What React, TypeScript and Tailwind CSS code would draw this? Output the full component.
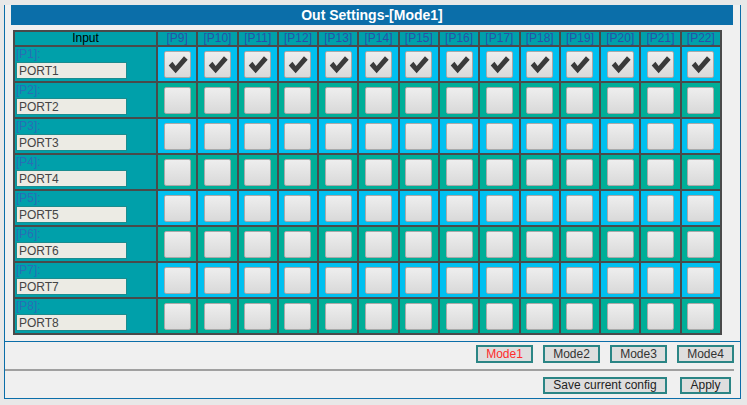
import { useState } from "react";

const outputs = Array.from({ length: 14 }, (_, i) => `P${i + 9}`);
const inputs = Array.from({ length: 8 }, (_, i) => ({
  id: `P${i + 1}`,
  name: `PORT${i + 1}`,
}));
const modes = ["Mode1", "Mode2", "Mode3", "Mode4"];

export default function App() {
  // input index -> set of checked outputs
  const [routes, setRoutes] = useState<boolean[][]>(() =>
    inputs.map((_, r) => outputs.map(() => r === 0)),
  );
  const [mode, setMode] = useState("Mode1");

  const toggle = (r: number, c: number) => {
    setRoutes((prev) =>
      prev.map((row, ri) =>
        row.map((v, ci) => (ci === c ? ri === r : v && ci !== c)),
      ),
    );
  };

  return (
    <div className="min-h-screen bg-[#e8e8e8] pt-[5px] pl-1 font-['Liberation_Sans',Arial,sans-serif]">
      <div className="w-[737px] h-[394px] border-x border-b border-[#0b6ea9] bg-[#f0f0f0] flex flex-col">
        {/* Matrix section */}
        <div className="h-[337px] shrink-0 border-b border-[#0b6ea9] pl-[6px]">
          <div className="w-[722px] h-5 bg-[#0b6ea9] text-white font-bold text-[14px] leading-5 text-center">
            Out Settings-[{mode}]
          </div>

          <table className="mt-[5px] ml-[2px] w-[709px] table-fixed border-separate border-spacing-0 border border-[#4a4a4a] text-[12px]">
            <thead>
              <tr className="bg-[#00a0aa]">
                <th className="w-[143px] p-0 border border-[#4a4a4a] font-normal text-black h-[15px] leading-[13px]">
                  Input
                </th>
                {outputs.map((o) => (
                  <th
                    key={o}
                    className="p-0 border border-[#4a4a4a] font-normal text-[#2a50a8] leading-[13px]"
                  >
                    [{o}]
                  </th>
                ))}
              </tr>
            </thead>
            <tbody>
              {inputs.map((inp, r) => (
                <tr key={inp.id}>
                  <td className="p-0 border border-[#4a4a4a] bg-[#00a0aa]">
                    <div className="h-[34px] pl-px flex flex-col">
                      <span className="text-[#2a6db5] leading-[15px]">
                        [{inp.id}]:
                      </span>
                      <input
                        readOnly
                        value={inp.name}
                        className="w-[111px] h-[17px] bg-[#ecebe4] border border-[#1b8c8e] text-[12px] text-[#444] px-[2px] outline-none"
                      />
                    </div>
                  </td>
                  {outputs.map((o, c) => (
                    <td
                      key={o}
                      className={`p-0 border border-[#4a4a4a] ${
                        r % 2 === 0 ? "bg-[#00c0f0]" : "bg-[#00ae98]"
                      }`}
                    >
                      <div className="h-[34px] flex items-center justify-center">
                        <button
                          onClick={() => toggle(r, c)}
                          className="w-[27px] h-[27px] rounded-[2px] border border-[#a9a9a9] bg-linear-to-b from-[#eeeeee] to-[#d9d9d9] flex items-center justify-center"
                        >
                          {routes[r][c] && (
                            <svg width="25" height="25" viewBox="0 0 27 27">
                              <path
                                d="M4 14.5 L8 10.5 L11.5 15 L20.5 4.5 L24.5 8.5 L11.5 23 Z"
                                fill="#3a3a3a"
                              />
                            </svg>
                          )}
                        </button>
                      </div>
                    </td>
                  ))}
                </tr>
              ))}
            </tbody>
          </table>
        </div>

        {/* Mode buttons */}
        <div className="h-[27px] shrink-0 flex justify-end gap-[10px] pt-[3px] pr-[6px]">
          {modes.map((m) => (
            <button
              key={m}
              onClick={() => setMode(m)}
              className={`w-[57px] h-[18px] border-2 border-[#2b8585] bg-[#dedede] text-[12px] leading-[14px] ${
                m === mode ? "text-[#ff2b2b]" : "text-[#333]"
              }`}
            >
              {m}
            </button>
          ))}
        </div>

        <div className="h-[2px] bg-[#a0a0a0] mr-[6px] shrink-0" />

        {/* Actions */}
        <div className="flex-1 flex justify-end gap-[13px] pt-[6px] pr-[9px]">
          <button className="w-[124px] h-[17px] border-2 border-[#2b8585] bg-[#dedede] text-[12px] leading-[13px] text-[#222]">
            Save current config
          </button>
          <button className="w-[51px] h-[17px] border-2 border-[#2b8585] bg-[#dedede] text-[12px] leading-[13px] text-[#222]">
            Apply
          </button>
        </div>
      </div>
    </div>
  );
}
